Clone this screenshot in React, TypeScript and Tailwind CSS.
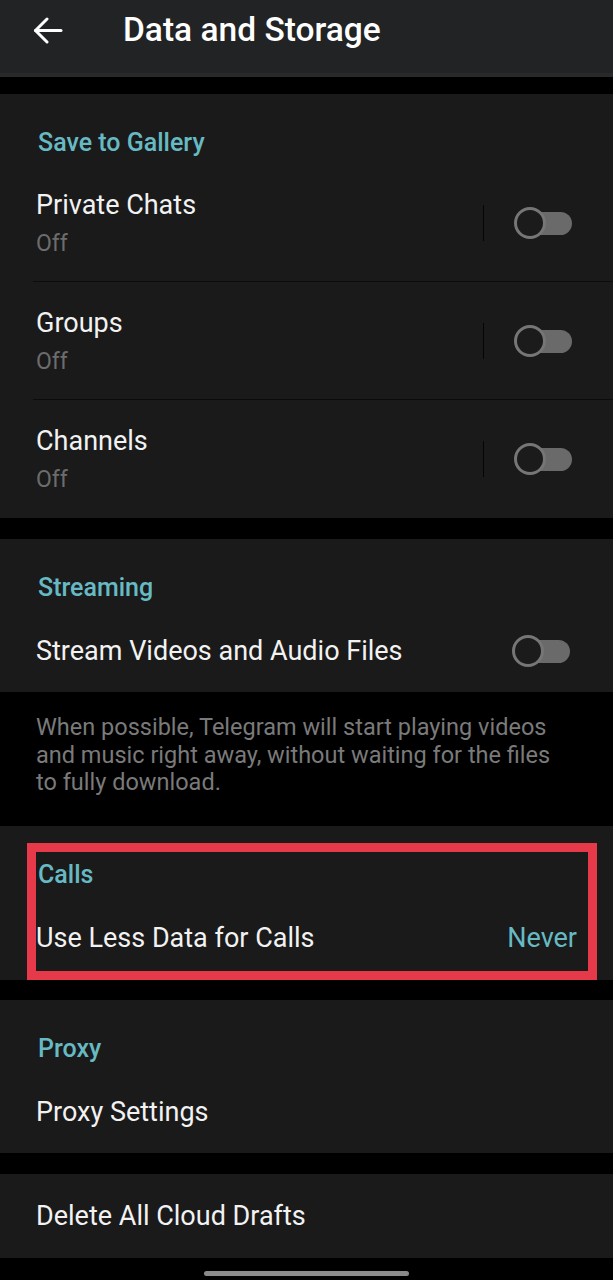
import React from "react";

const font = { fontFamily: "Roboto, 'Noto Sans', Arial, sans-serif" };

function Toggle() {
  return (
    <div className="relative w-[58px] h-[32px] shrink-0">
      <div className="absolute right-0 top-[5px] h-[23px] w-[44px] rounded-full bg-[#6a6a6a]" />
      <div className="absolute left-0 top-0 h-[32px] w-[32px] rounded-full border-[3px] border-[#767676] bg-[#1b1b1b]" />
    </div>
  );
}

function SectionTitle({ children }: { children: React.ReactNode }) {
  return (
    <div className="h-[70px] pt-[36px] pl-[38px]">
      <p className="text-[25px] leading-[26px] font-medium text-[#67bac4]">{children}</p>
    </div>
  );
}

function ToggleRow({ title, last }: { title: string; last?: boolean }) {
  return (
    <div
      className={
        "ml-[33px] pl-[3px] pr-[41px] h-[118px] flex items-center " +
        (last ? "" : "border-b border-[#0c0c0c]")
      }
    >
      <div className="flex-1 mt-[1px]">
        <p className="text-[27px] leading-[30px] text-[#f2f2f2]">{title}</p>
        <p className="mt-[11px] text-[23px] leading-[26px] text-[#6c6c6c]">Off</p>
      </div>
      <div className="w-px h-[36px] bg-[#050505] mr-[30px]" />
      <Toggle />
    </div>
  );
}

export default function App() {
  return (
    <div className="w-[613px] h-[1280px] bg-black overflow-hidden" style={font}>
      {/* Top bar */}
      <div className="h-[73px] bg-[#222325] flex items-center pb-[13px]">
        <svg
          viewBox="0 0 30 27"
          className="ml-[33px] w-[30px] h-[27px]"
          fill="none"
          stroke="#ffffff"
          strokeWidth="3"
          strokeLinecap="round"
          strokeLinejoin="round"
        >
          <path d="M28 13.5H2.5" />
          <path d="M14 2L2.5 13.5L14 25" />
        </svg>
        <h1 className="ml-[60px] text-[33.5px] leading-[38px] font-medium text-white">Data and Storage</h1>
      </div>
      <div className="h-[4px] bg-[#28292b]" />
      <div className="h-[17px]" />

      {/* Save to Gallery */}
      <div className="bg-[#1a1a1a]">
        <SectionTitle>Save to Gallery</SectionTitle>
        <ToggleRow title="Private Chats" />
        <ToggleRow title="Groups" />
        <ToggleRow title="Channels" last />
      </div>

      <div className="h-[21px]" />

      {/* Streaming */}
      <div className="bg-[#1a1a1a] h-[153px]">
        <SectionTitle>Streaming</SectionTitle>
        <div className="h-[83px] pl-[36px] pr-[43px] flex items-center">
          <p className="flex-1 text-[27px] leading-[30px] text-[#f2f2f2]">Stream Videos and Audio Files</p>
          <Toggle />
        </div>
      </div>

      <div className="h-[134px] pt-[22px] pl-[36px] pr-[50px]">
        <p className="text-[23.5px] leading-[27.5px] text-[#7a7a7a]">
          When possible, Telegram will start playing videos and music right away, without waiting for the files
          to fully download.
        </p>
      </div>

      {/* Calls */}
      <div className="relative bg-[#1a1a1a] h-[154px]">
        <SectionTitle>Calls</SectionTitle>
        <div className="h-[84px] pl-[36px] pr-[36px] flex items-center justify-between">
          <p className="text-[27px] leading-[30px] text-[#f2f2f2]">Use Less Data for Calls</p>
          <p className="text-[27px] leading-[30px] text-[#67bac4]">Never</p>
        </div>
        <div className="absolute left-[27px] top-[17px] w-[570px] h-[137px] border-[9px] border-[#e6394a]" />
      </div>

      <div className="h-[20px]" />

      {/* Proxy */}
      <div className="bg-[#1a1a1a] h-[153px]">
        <SectionTitle>Proxy</SectionTitle>
        <div className="h-[83px] pl-[36px] flex items-center">
          <p className="text-[27px] leading-[30px] text-[#f2f2f2]">Proxy Settings</p>
        </div>
      </div>

      <div className="h-[21px]" />

      <div className="bg-[#1a1a1a] h-[84px] pl-[36px] flex items-center">
        <p className="text-[27px] leading-[30px] text-[#f2f2f2]">Delete All Cloud Drafts</p>
      </div>

      {/* Home indicator */}
      <div className="h-[22px] flex justify-center pt-[13px]">
        <div className="w-[205px] h-[5px] rounded-full bg-[#8a8a8a]" />
      </div>
    </div>
  );
}
